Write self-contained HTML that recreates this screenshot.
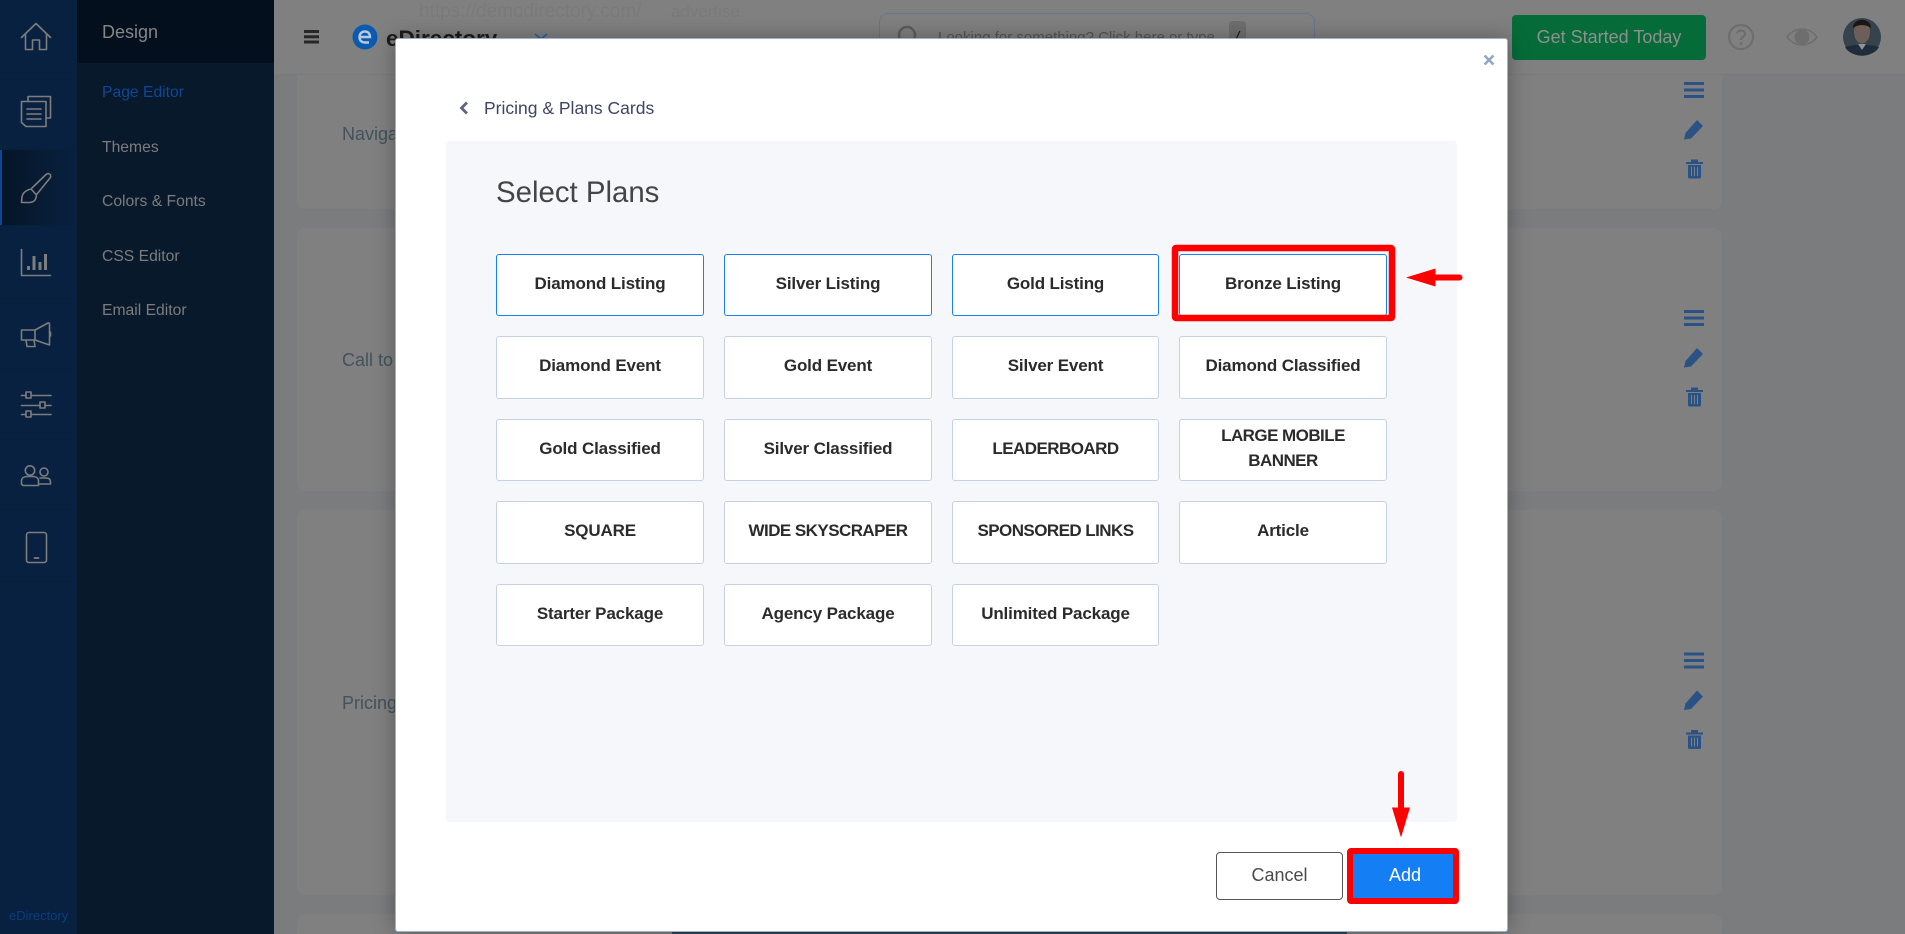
<!DOCTYPE html>
<html lang="en"><head><meta charset="utf-8"><title>Select Plans</title>
<style>
html,body{margin:0;padding:0;width:1905px;height:934px;overflow:hidden;background:#7b7c7e;font-family:"Liberation Sans",sans-serif}
#root{position:absolute;left:0;top:0;width:1905px;height:934px;overflow:hidden;background:#7b7c7e}
.a{position:absolute;white-space:nowrap}
.side{color:#7c7c7c;font-size:15.7px;left:102px;line-height:22px}
.card{position:absolute;left:297px;width:1425px;background:#808080;border-radius:8px}
.lbl{position:absolute;left:342px;color:#43525c;font-size:18px;line-height:24px}
#modal{position:absolute;left:395px;top:38px;width:1111px;height:892px;background:#fff;border:1px solid #9fb2c9;border-radius:3px;box-shadow:0 0 22px rgba(0,0,0,.32)}
#panel{position:absolute;left:446px;top:141px;width:1011px;height:681px;background:#f6f7fb;border-radius:4px}
.b{position:absolute;width:206px;height:60px;background:#fff;border:1px solid #c6d2e2;border-radius:3px;display:flex;align-items:center;justify-content:center;text-align:center;font-weight:bold;font-size:17px;letter-spacing:-.15px;line-height:25px;color:#2b2b2b}
.b span{position:relative;top:-2px}
.s{border-color:#1a80f0}
.u{letter-spacing:-.55px}
.c3{width:205px}
.t{height:61px}
</style></head><body><div id="root">
<div class="a" style="left:0;top:0;width:77px;height:934px;background:#082140"></div>
<div class="a" style="left:77px;top:0;width:197px;height:934px;background:#07192b"></div>
<div class="a" style="left:77px;top:0;width:197px;height:63px;background:#030f1d"></div>
<div class="a" style="left:2px;top:150px;width:75px;height:75px;background:linear-gradient(90deg,#061527,#082140)"></div>
<div class="a" style="left:0;top:150px;width:2px;height:75px;background:#0f4796"></div>
<div class="a side" style="top:21px;font-size:18px;color:#858585">Design</div>
<div class="a side" style="top:82px;color:#0f4796">Page Editor</div>
<div class="a side" style="top:137px">Themes</div>
<div class="a side" style="top:191px">Colors &amp; Fonts</div>
<div class="a side" style="top:246px">CSS Editor</div>
<div class="a side" style="top:300px">Email Editor</div>
<div class="a" style="left:9px;top:908px;font-size:13px;line-height:16px;color:#0d3c7c">eDirectory</div>

<div class="card" style="top:60px;height:149px"></div>
<div class="card" style="top:228px;height:263px"></div>
<div class="card" style="top:510px;height:385px"></div>
<div class="card" style="top:914px;height:20px;border-radius:8px 8px 0 0"></div>
<div class="a" style="left:274px;top:0;width:1631px;height:75px;background:#808080;border-bottom:1px solid #7a7a7a;box-sizing:border-box"></div>
<div class="lbl" style="top:122px">Navigation</div>
<div class="lbl" style="top:348px">Call to Action</div>
<div class="lbl" style="top:691px">Pricing</div>

<div class="a" style="left:419px;top:2px;font-size:19px;color:#7a7a7a;line-height:20px">https://demodirectory.com/</div>
<div class="a" style="left:671px;top:2px;font-size:17px;color:#7a7a7a;line-height:20px">advertise</div>
<div class="a" style="left:386px;top:24px;font-size:22.5px;font-weight:bold;line-height:30px;color:#1c1c1c">eDirectory</div>
<div class="a" style="left:938px;top:28px;font-size:15px;line-height:20px;color:#555">Looking for something? Click here or type</div>
<div class="a" style="left:879px;top:13px;width:434px;height:40px;border:1px solid #68768a;border-radius:9px"></div>
<div class="a" style="left:1229px;top:21px;width:17px;height:30px;background:#6f6f6f;border-radius:3px"></div>
<div class="a" style="left:1235px;top:28px;font-size:15px;line-height:20px;color:#111;font-style:italic">/</div>
<div class="a" style="left:1512px;top:15px;width:194px;height:45px;background:#056c39;border-radius:4px;color:#8f8f8f;font-size:18px;line-height:45px;text-align:center">Get Started Today</div>

<svg class="a" style="left:0;top:0" width="1905" height="934" viewBox="0 0 1905 934" fill="none">
<g stroke="#06203a" stroke-width="1"><path d="M0 72.5H77M0 149.5H77M0 225.5H77M0 298.5H77M0 369.5H77M0 439.5H77M0 509.5H77M0 581.5H77"/></g>
<g stroke="#7d7d7d" stroke-width="1.6" stroke-linejoin="round" stroke-linecap="round">
<path d="M21.5 37.5 36 23.5 50.5 37.5M25.5 34V49.5H32.5V40H39.5V49.5H46.5V34"/>
<path d="M28 101V96.5H50.5V118H46M46 101.5H21.5V122.5L26 126.5H46ZM27 109H41M27 114H41M27 119H41"/>
<path d="M32 188 46 174.500Q49 172.500 50.500 175 51 177 50 178L37 194"/>
<path d="M31 189Q23 191 22 197L21.500 202.500H30Q36 202 36.500 195Z"/>
<path d="M21.5 249.5V275.5H50.5"/><path stroke-width="3" stroke-linecap="butt" d="M28.5 270V266M34 270V256M40 270V262M45.5 270V254"/>
<path d="M35 330 48 323Q49.500 322.500 49.500 324V345L35 340ZM35 330H21.500V340H35M26 340 27 346.500H35L34 340M50.500 332V336"/>
<path d="M21.5 395.5H51M21.5 405.5H51M21.5 414.5H51"/><g fill="#082140"><rect x="26" y="392" width="5" height="6"/><rect x="40" y="402" width="5" height="6"/><rect x="26" y="411" width="5" height="6"/></g>
<circle cx="30" cy="470.5" r="4.7"/><circle cx="44" cy="472" r="4"/><path d="M21.5 484V481C21.5 478 24 476.500 27 476.500H33C36 476.500 38.500 478 38.500 481V485.500H23ZM40 478H46Q50.500 478 50.500 482V484H40"/>
<rect x="26.5" y="532.5" width="20" height="30" rx="2.5"/><path d="M34.5 558H38.5" stroke-width="1.8"/>
</g>
<g fill="#272727"><rect x="304" y="30" width="15" height="3"/><rect x="304" y="35.3" width="15" height="3"/><rect x="304" y="40.5" width="15" height="3"/></g>
<circle cx="365" cy="37" r="12.5" fill="#0a5bb0"/>
<path d="M360 37H370C370 33.5 368 31.5 365 31.5 361.5 31.5 359.5 34 359.5 37 359.5 40.5 361.5 42.5 365 42.5H369" stroke="#b9c8dc" stroke-width="2.4"/>
<path d="M535 34 541 39 547 34" stroke="#2a5fa8" stroke-width="1.6"/>
<circle cx="907" cy="35" r="8" stroke="#5d5d5d" stroke-width="2.4"/>
<circle cx="1741" cy="37" r="12" stroke="#6e6e6e" stroke-width="2.2"/>
<path d="M1737 33.5C1737.5 29.5 1745 29.5 1745 34 1745 37 1741 36.5 1741 40" stroke="#6e6e6e" stroke-width="2.2"/><circle cx="1741" cy="43.5" r="1.5" fill="#6e6e6e"/>
<path d="M1787 37C1795 26.5 1809 26.5 1817 37 1809 47.5 1795 47.5 1787 37Z" stroke="#6e6e6e" stroke-width="1.6"/><circle cx="1802" cy="37" r="7.5" fill="#6e6e6e"/>
<circle cx="1862" cy="37" r="19" fill="#36434d"/>
<path d="M1845 47C1852 44 1872 44 1879 47 1874 58 1850 58 1845 47Z" fill="#1f2d3a"/>
<ellipse cx="1862" cy="32" rx="8" ry="11.5" fill="#6d5f57"/><path d="M1853 28C1853 17 1871 17 1871 28 1866 24 1858 24 1853 28Z" fill="#1a1612"/>
<path d="M1858 44 1862 50 1866 44Z" fill="#8c949b"/>
<g id="ic" fill="#2a5285">
<path d="M1684 82h20v3h-20zM1684 88.500h20v3h-20zM1684 95h20v3h-20z"/>
<path d="M1684 139.500 1685.500 133 1697 120 1703 126 1691 138.500Z"/>
<path d="M1686 162h17v2h-17zM1691 159.500h7v3h-7z"/><path fill-rule="evenodd" d="M1688 165h13v12c0 .8-.6 1.500-1.500 1.500h-10c-.9 0-1.500-.7-1.500-1.500ZM1691 167v9h1v-9ZM1694 167v9h1v-9ZM1697 167v9h1v-9Z"/>
</g>
<use href="#ic" y="228"/>
<use href="#ic" y="570.500"/>
<path d="M672 931H1347V934H672Z" fill="#2f4558"/>
</svg>

<div id="modal"></div>
<svg class="a" style="left:1483px;top:54px" width="12" height="12" viewBox="0 0 12 12"><path d="M1.500 1.500 10.500 10.500M10.500 1.500 1.500 10.500" stroke="#92a6bf" stroke-width="2.600"/></svg>
<svg class="a" style="left:458px;top:101px" width="12" height="14" viewBox="0 0 12 14"><path d="M9 1.500 3.500 7 9 12.500" fill="none" stroke="#5c6480" stroke-width="2.800"/></svg>
<div class="a" style="left:484px;top:96px;font-size:17.5px;line-height:24px;color:#3d4566">Pricing &amp; Plans Cards</div>
<div id="panel"></div>
<div class="a" style="left:496px;top:174px;font-size:29.4px;line-height:38px;color:#454545">Select Plans</div>

<div class="b s" style="left:496px;top:254px"><span>Diamond Listing</span></div>
<div class="b s" style="left:724px;top:254px"><span>Silver Listing</span></div>
<div class="b s c3" style="left:952px;top:254px"><span>Gold Listing</span></div>
<div class="b s" style="left:1179px;top:254px"><span>Bronze Listing</span></div>
<div class="b t" style="left:496px;top:336px"><span>Diamond Event</span></div>
<div class="b t" style="left:724px;top:336px"><span>Gold Event</span></div>
<div class="b t c3" style="left:952px;top:336px"><span>Silver Event</span></div>
<div class="b t" style="left:1179px;top:336px"><span>Diamond Classified</span></div>
<div class="b" style="left:496px;top:419px"><span>Gold Classified</span></div>
<div class="b" style="left:724px;top:419px"><span>Silver Classified</span></div>
<div class="b c3 u" style="left:952px;top:419px"><span>LEADERBOARD</span></div>
<div class="b u" style="left:1179px;top:419px"><span>LARGE MOBILE<br>BANNER</span></div>
<div class="b t" style="left:496px;top:501px"><span>SQUARE</span></div>
<div class="b t u" style="left:724px;top:501px"><span>WIDE SKYSCRAPER</span></div>
<div class="b t c3 u" style="left:952px;top:501px"><span>SPONSORED LINKS</span></div>
<div class="b t" style="left:1179px;top:501px"><span>Article</span></div>
<div class="b" style="left:496px;top:584px"><span>Starter Package</span></div>
<div class="b" style="left:724px;top:584px"><span>Agency Package</span></div>
<div class="b c3" style="left:952px;top:584px"><span>Unlimited Package</span></div>

<div class="a" style="left:1216px;top:852px;width:125px;height:46px;border:1px solid #555;border-radius:4px;background:#fff;text-align:center;font-size:18px;line-height:45px;color:#4a4a4a">Cancel</div>
<div class="a" style="left:1352px;top:854px;width:102px;height:44px;background:#147ff5;text-align:center;font-size:18px;line-height:43px;color:#fff;box-sizing:border-box;padding-left:4px">Add</div>
<svg class="a" style="left:0;top:0;pointer-events:none" width="1905" height="934" viewBox="0 0 1905 934" fill="none">
<rect x="1175" y="248" width="217" height="70" rx="1" stroke="#fe0000" stroke-width="6.500"/>
<rect x="1350" y="851" width="106" height="50" rx="1" stroke="#fe0000" stroke-width="6"/>
<path d="M1406 277.500 1435.500 268.500V274.500H1459.500A3 3 0 0 1 1459.500 280.500H1435.500V286.500Z" fill="#fe0000"/>
<path d="M1398 774A3 3 0 0 1 1404 774V807.500H1410L1401 837.500 1392 807.500H1398Z" fill="#fe0000"/>
</svg>
</div></body></html>
